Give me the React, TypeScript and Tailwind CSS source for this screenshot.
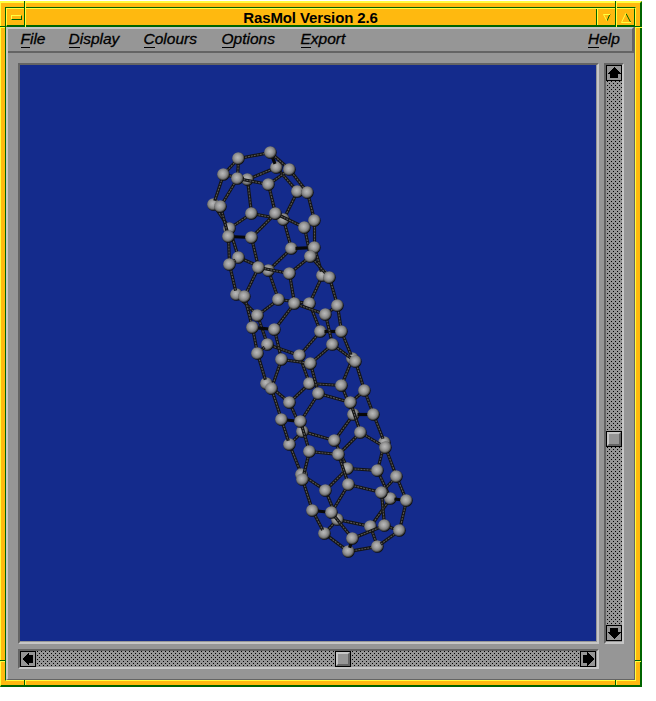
import React from "react";

type Point = [number, number];

// Carbon positions in window coordinates, numbered from 1 in the bond table.
const atoms: Point[] = [
  [270, 152], [238, 158], [276, 167], [289, 169], [223, 174], [237, 178], [247, 179], [268, 184], [297, 191], [307, 192],
  [213, 204], [220, 206], [251, 213], [275, 213], [283, 219], [314, 220], [304, 227], [229, 228], [228, 236], [251, 237],
  [291, 248], [314, 247], [310, 256], [238, 257], [229, 264], [258, 267], [268, 270], [289, 273], [322, 275], [329, 277],
  [236, 294], [244, 296], [278, 299], [294, 303], [309, 303], [337, 305], [325, 314], [257, 315], [252, 327], [274, 329],
  [320, 331], [341, 331], [332, 344], [267, 344], [257, 353], [281, 359], [299, 355], [310, 363], [352, 358], [355, 361],
  [266, 383], [271, 388], [309, 383], [341, 385], [364, 390], [318, 393], [289, 402], [350, 402], [353, 414], [373, 414],
  [281, 419], [300, 421], [302, 431], [334, 440], [360, 432], [384, 442], [385, 447], [289, 444], [309, 451], [338, 454],
  [347, 468], [377, 470], [396, 476], [301, 474], [302, 479], [325, 490], [348, 484], [381, 492], [390, 498], [406, 500],
  [312, 510], [331, 512], [337, 519], [324, 533], [352, 538], [348, 551], [377, 546], [370, 526], [384, 525], [399, 530],
];

const bonds: Point[] = [
  [1, 2], [1, 3], [1, 4], [2, 5], [2, 6], [3, 7], [3, 9], [4, 8], [4, 10], [5, 11], [5, 7], [6, 8], [6, 12], [7, 13],
  [8, 14], [9, 15], [9, 10], [10, 16], [11, 12], [11, 18], [12, 19], [13, 18], [13, 15], [14, 17], [14, 20], [15, 21],
  [16, 17], [16, 22], [17, 23], [18, 24], [19, 20], [19, 25], [20, 26], [21, 22], [21, 27], [22, 29], [23, 28], [23, 30],
  [24, 25], [24, 27], [25, 31], [26, 32], [26, 28], [27, 33], [28, 34], [29, 35], [29, 30], [30, 36], [31, 32], [31, 38],
  [32, 39], [33, 38], [33, 35], [34, 40], [34, 37], [35, 41], [36, 37], [36, 42], [37, 43], [38, 44], [39, 40], [39, 45],
  [40, 46], [41, 42], [41, 47], [42, 49], [43, 48], [43, 50], [44, 45], [44, 47], [45, 51], [46, 52], [46, 48], [47, 53],
  [48, 56], [49, 50], [49, 54], [50, 55], [51, 52], [51, 57], [52, 61], [53, 57], [53, 54], [54, 59], [55, 58], [55, 60],
  [56, 62], [56, 58], [57, 63], [58, 65], [59, 60], [59, 64], [60, 66], [61, 62], [61, 68], [62, 69], [63, 68], [63, 64],
  [64, 71], [65, 70], [65, 67], [66, 67], [66, 72], [67, 73], [68, 74], [69, 70], [69, 75], [70, 77], [71, 76], [71, 72],
  [72, 79], [73, 78], [73, 80], [74, 75], [74, 76], [75, 81], [76, 83], [77, 82], [77, 78], [78, 89], [79, 80], [79, 88],
  [80, 90], [81, 82], [81, 84], [82, 85], [83, 84], [83, 88], [84, 86], [85, 86], [85, 89], [86, 87], [87, 88], [87, 90],
  [89, 90],
];

// Atoms on the far side of the tube.
const far = new Set([
  3, 7, 9, 11, 13, 15, 18, 21, 24, 27, 29, 31, 33, 35, 38, 41, 44, 47, 49, 51, 53, 54, 57, 59, 63, 64, 66, 68, 71, 72,
  74, 76, 79, 83, 84, 86, 87, 88,
]);

const dark = new Set(["19-20", "21-22", "39-40", "41-42", "59-60", "61-62", "79-80", "81-82", "1-3", "85-86"]);

function Bond({ a, b }: { a: number; b: number }) {
  const [x1, y1] = atoms[a - 1];
  const [x2, y2] = atoms[b - 1];
  const len = Math.hypot(x2 - x1, y2 - y1) || 1;
  const ux = (x2 - x1) / len;
  const uy = (y2 - y1) / len;
  const s = far.has(a) ? 4 : 0;
  const e = far.has(b) ? 4 : 0;
  const line = { x1: x1 + ux * s, y1: y1 + uy * s, x2: x2 - ux * e, y2: y2 - uy * e };
  const plain = dark.has(`${a}-${b}`);
  return (
    <g transform="translate(0.5 0.5)">
      <line {...line} stroke={plain ? "#080808" : "#141414"} strokeWidth="3.2" />
      {!plain && <line {...line} stroke="#585858" strokeWidth="1.1" strokeDasharray="2 1" />}
    </g>
  );
}

function Atom({ n }: { n: number }) {
  const [x, y] = atoms[n - 1];
  return <circle cx={x + 0.4} cy={y + 0.5} r="6.3" fill="url(#carbon)" />;
}

function Molecule() {
  const ids = atoms.map((_, i) => i + 1);
  const count = ([a, b]: Point) => (far.has(a) ? 1 : 0) + (far.has(b) ? 1 : 0);
  const layer = (k: number) =>
    bonds.filter((p) => count(p) === k).map(([a, b]) => <Bond key={`${a}-${b}`} a={a} b={b} />);
  return (
    <svg className="block" width="576" height="576" viewBox="20 65 576 576">
      <defs>
        <radialGradient id="carbon" cx="0.44" cy="0.42" r="0.6">
          <stop offset="0" stopColor="#b8b8b8" />
          <stop offset="0.35" stopColor="#a0a0a0" />
          <stop offset="0.65" stopColor="#7c7c7c" />
          <stop offset="0.8" stopColor="#4a4a4a" />
          <stop offset="0.92" stopColor="#101010" />
        </radialGradient>
      </defs>
      {layer(2)}
      {ids.filter((n) => far.has(n)).map((n) => <Atom key={n} n={n} />)}
      {layer(1)}
      {layer(0)}
      {ids.filter((n) => !far.has(n)).map((n) => <Atom key={n} n={n} />)}
    </svg>
  );
}

function Stipple({ id }: { id: string }) {
  return (
    <svg className="block min-h-0 min-w-0 flex-1" shapeRendering="crispEdges">
      <defs>
        <pattern id={id} width="4" height="4" patternUnits="userSpaceOnUse">
          <rect x="1" y="0" width="1" height="1" />
          <rect x="3" y="2" width="1" height="1" />
        </pattern>
      </defs>
      <rect width="100%" height="100%" fill={`url(#${id})`} />
    </svg>
  );
}

const turns = { up: "rotate-0", right: "rotate-90", down: "rotate-180", left: "-rotate-90" };

function Arrow({ dir }: { dir: keyof typeof turns }) {
  return (
    <div className="h-4 w-4 shrink-0 border border-black">
      <svg className={`block ${turns[dir]}`} width="14" height="14" viewBox="0 0 14 14" shapeRendering="crispEdges">
        <path d="M7 1 L14 8 H11 V12 H3 V8 H0 Z" />
      </svg>
    </div>
  );
}

function Thumb() {
  return (
    <div className="h-4 w-4 shrink-0 border border-black">
      <div className="h-full w-full border-2 border-t-[#c6c6c6] border-r-[#646464] border-b-[#646464] border-l-[#c6c6c6]" />
    </div>
  );
}

function MenuItem({ label, className }: { label: string; className: string }) {
  return (
    <div className={`flex h-5 flex-col items-start pt-px whitespace-pre text-[15.5px] leading-[18px] italic [-webkit-text-stroke:0.3px_black] ${className}`}>
      <span className="h-[18px]">
        <span className="inline-block h-[18px] border-b border-black">{label[0]}</span>
        {label.slice(1)}
      </span>
    </div>
  );
}

export default function App() {
  return (
    <div className="h-[701px] w-[656px] overflow-hidden bg-white pt-px font-['Liberation_Sans',Arial,sans-serif] text-black">
      <div className="relative h-[686px] w-[642px] border-t-2 border-r-2 border-b-2 border-l border-t-[#ffff40] border-r-[#006400] border-b-[#006400] border-l-[#ffff40] bg-[#ffb90f] p-1">
        <div className="flex h-full flex-col border border-t-[#006400] border-r-[#ffff40] border-b-[#ffff40] border-l-[#006400]">
          <div className="flex h-[19px] shrink-0 border-t border-r border-b-2 border-l border-t-[#ffff40] border-r-[#006400] border-b-[#006400] border-l-[#ffff40]">
            <div className="flex w-[17px] items-center justify-center pt-px pr-1">
              <div className="ml-1.5 h-[5px] w-[11px] shrink-0 border border-t-[#ffff40] border-r-[#006400] border-b-[#006400] border-l-[#ffff40]" />
            </div>
            <div className="flex-1 pl-px text-center text-[15px] leading-[17px] font-bold tracking-[-0.12px]">RasMol Version 2.6</div>
            <div className="flex h-full w-[19px] items-center border-l border-l-[#006400]">
              <svg width="18" height="16" fill="none" className="block border-l border-[#ffff40]">
                <path d="M12 5 L9 12" stroke="#006400" />
                <path d="M12 5.5 H5.5 L9 12" stroke="#ffff40" />
              </svg>
            </div>
            <svg width="19" height="16" fill="none" className="block shrink-0">
              <path d="M11 4.5 L15.5 13" stroke="#006400" />
              <path d="M11 4 L6.5 13.5 H16" stroke="#ffff40" />
            </svg>
          </div>

          <div className="flex min-h-0 flex-1 flex-col border-r border-b border-l-2 border-r-[#646464] border-b-[#646464] border-l-[#c6c6c6] bg-[#969696]">
            <div className="flex h-[26px] shrink-0 border-t-2 border-r-2 border-b-2 border-t-[#c6c6c6] border-r-[#646464] border-b-[#646464] pl-[12.5px]">
              <MenuItem label="File" className="w-12" />
              <MenuItem label="Display" className="w-[75px]" />
              <MenuItem label="Colours" className="w-[78px]" />
              <MenuItem label="Options" className="w-[79px]" />
              <MenuItem label="Export" className="w-[60px]" />
              <MenuItem label="Help" className="mr-[11px] ml-auto w-[33px]" />
            </div>

            <div className="flex flex-col gap-[5px] pt-[10px] pl-[10px]">
              <div className="flex gap-[5px]">
                <div className="h-[581px] w-[581px] border-2 border-t-[#646464] border-r-[#c6c6c6] border-b-[#c6c6c6] border-l-[#646464]">
                  <div className="h-[576px] w-[576px] bg-[#142b8c]">
                    <Molecule />
                  </div>
                </div>
                <div className="flex h-[581px] w-[20px] flex-col border-2 border-t-[#646464] border-r-[#c6c6c6] border-b-[#c6c6c6] border-l-[#646464] pb-px">
                  <Arrow dir="up" />
                  <div className="flex h-[350px] w-4"><Stipple id="stipple-a" /></div>
                  <Thumb />
                  <div className="flex h-[178px] w-4"><Stipple id="stipple-b" /></div>
                  <Arrow dir="down" />
                </div>
              </div>
              <div className="flex h-[20px] w-[581px] border-2 border-t-[#646464] border-r-[#c6c6c6] border-b-[#c6c6c6] border-l-[#646464] pr-px">
                <Arrow dir="left" />
                <div className="flex h-4 w-[299px]"><Stipple id="stipple-c" /></div>
                <Thumb />
                <div className="flex h-4 w-[229px]"><Stipple id="stipple-d" /></div>
                <Arrow dir="right" />
              </div>
            </div>
          </div>
        </div>

        {/* Grooves that mark the resize corners of the frame */}
        <div className="absolute -top-0.5 left-[23px] h-[26px] w-0.5 border-r border-l border-r-[#ffff40] border-l-[#006400]" />
        <div className="absolute -top-0.5 left-[614px] h-[26px] w-0.5 border-r border-l border-r-[#ffff40] border-l-[#006400]" />
        <div className="absolute top-[23px] -left-px h-0.5 w-[5px] border-t border-b border-t-[#006400] border-b-[#ffff40]" />
        <div className="absolute top-[23px] left-[634px] h-0.5 w-[7px] border-t border-b border-t-[#006400] border-b-[#ffff40]" />
        <div className="absolute top-[657px] -left-px h-0.5 w-[5px] border-t border-b border-t-[#006400] border-b-[#ffff40]" />
        <div className="absolute top-[657px] left-[634px] h-0.5 w-[6px] border-t border-b border-t-[#006400] border-b-[#ffff40]" />
        <div className="absolute top-[677px] left-[23px] h-[5px] w-0.5 border-r border-l border-r-[#ffff40] border-l-[#006400]" />
        <div className="absolute top-[677px] left-[614px] h-[5px] w-0.5 border-r border-l border-r-[#ffff40] border-l-[#006400]" />
      </div>
    </div>
  );
}
